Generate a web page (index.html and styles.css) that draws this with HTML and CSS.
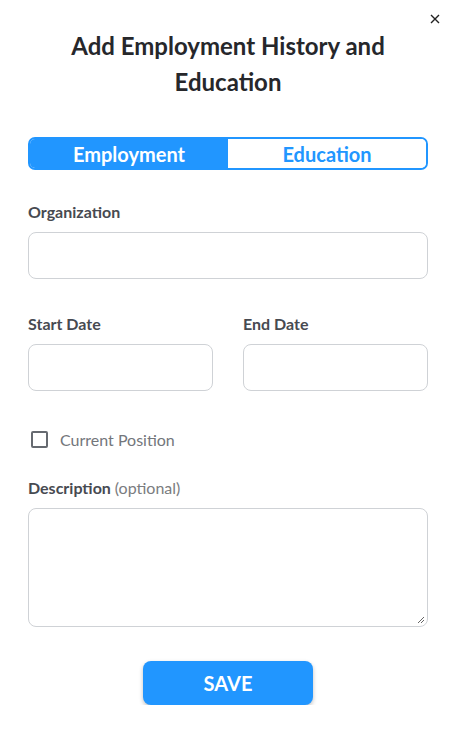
FILE: index.html
```html
<!DOCTYPE html>
<html lang="en">
<head>
<meta charset="utf-8">
<title>Add Employment History and Education</title>
<link rel="stylesheet" href="styles.css">
</head>
<body>
<div class="modal">
  <button class="close" aria-label="Close">
    <svg width="10" height="10" viewBox="0 0 10 10"><path d="M1 1 L9 9 M9 1 L1 9" stroke="#222" stroke-width="1.4" fill="none"/></svg>
  </button>
  <h1 class="title">Add Employment History and Education</h1>
  <div class="tabs">
    <div class="tab active">Employment</div>
    <div class="tab">Education</div>
  </div>
  <div class="field">
    <label class="label">Organization</label>
    <div class="input"></div>
  </div>
  <div class="row">
    <div class="field">
      <label class="label">Start Date</label>
      <div class="input"></div>
    </div>
    <div class="field">
      <label class="label">End Date</label>
      <div class="input"></div>
    </div>
  </div>
  <div class="check">
    <span class="box"></span>
    <span class="check-label">Current Position</span>
  </div>
  <div class="field">
    <label class="label">Description <span class="opt">(optional)</span></label>
    <div class="input textarea">
      <svg class="grip" width="8" height="8" viewBox="0 0 8 8"><path d="M7 1 L1 7 M7 4 L4 7" stroke="#666" stroke-width="1" fill="none"/></svg>
    </div>
  </div>
  <div class="actions">
    <button class="save">SAVE</button>
  </div>
</div>
</body>
</html>
```
FILE: styles.css
```css
* { box-sizing: border-box; }
html, body { margin: 0; padding: 0; background: #fff; }
body { font-family: Lato, "Noto Sans", sans-serif; color: #25272b; }
.modal {
  position: relative;
  width: 400px;
  margin-left: 28px;
  padding-top: 28px;
}
.close {
  position: absolute;
  top: 13px;
  right: -13px;
  width: 12px;
  height: 12px;
  padding: 0;
  border: 0;
  background: none;
  display: flex;
  align-items: center;
  justify-content: center;
}
.title {
  margin: 0;
  padding: 0 30px;
  text-align: center;
  font-size: 24px;
  line-height: 36px;
  font-weight: 700;
  color: #26272b;
}
.tabs {
  margin-top: 37px;
  display: flex;
  height: 33px;
  border: 2px solid #2196ff;
  border-radius: 7px;
  overflow: hidden;
}
.tab {
  flex: 1;
  display: flex;
  align-items: center;
  justify-content: center;
  font-size: 20px;
  font-weight: 700;
  color: #2196ff;
  background: #fff;
}
.tab.active { background: #2196ff; color: #fff; }
.field { display: flex; flex-direction: column; flex: 1; }
.label {
  font-size: 16px;
  font-weight: 700;
  color: #474a51;
  line-height: 20px;
}
.opt { font-weight: 400; color: #7a7c80; }
.tabs + .field { margin-top: 32px; }
.input {
  margin-top: 10px;
  height: 47px;
  border: 1px solid #cfd2d6;
  border-radius: 8px;
  background: #fff;
}
.row { display: flex; gap: 30px; margin-top: 35px; }
.check {
  margin-top: 39px;
  display: flex;
  align-items: center;
  gap: 12px;
  padding-left: 3px;
}
.box {
  width: 17px;
  height: 17px;
  border: 2px solid #666a70;
  border-radius: 2px;
}
.check-label { font-size: 16px; color: #73767b; }
.check + .field { margin-top: 29px; }
.textarea { height: 119px; position: relative; }
.grip { position: absolute; right: 2px; bottom: 2px; }
.actions { display: flex; justify-content: center; margin-top: 34px; }
.save {
  width: 170px;
  height: 44px;
  border: 0;
  border-radius: 8px;
  background: #2196ff;
  color: #fff;
  font-family: Lato, sans-serif;
  font-size: 20px;
  font-weight: 700;
  box-shadow: 0 2px 4px rgba(0,0,0,0.25);
}
```
